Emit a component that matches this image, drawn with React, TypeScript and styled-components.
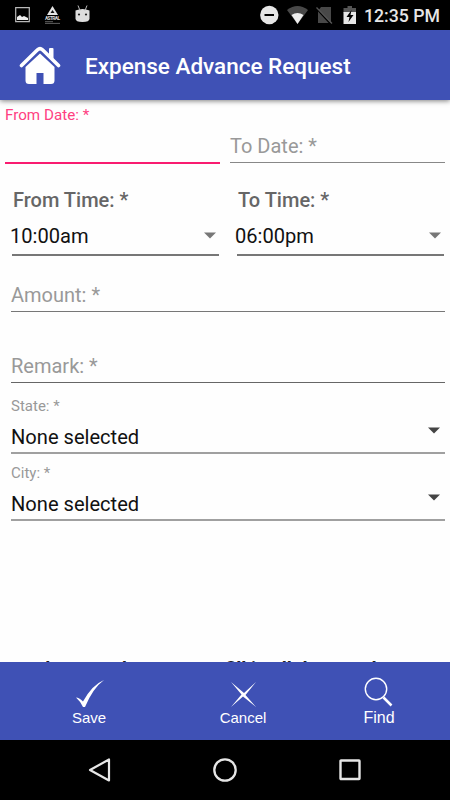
import React from "react";
import styled, { createGlobalStyle } from "styled-components";

const GlobalStyle = createGlobalStyle`
  * { box-sizing: border-box; }
  body { margin: 0; background: #fff; font-family: Roboto, sans-serif; }
`;

const Screen = styled.div`
  width: 450px;
  height: 800px;
  display: flex;
  flex-direction: column;
  overflow: hidden;
  background: #fefefe;
`;

const StatusBar = styled.div`
  height: 30px;
  flex: none;
  background: #000;
  display: flex;
  justify-content: space-between;
  color: #e6e6e6;
`;

const Clock = styled.time`
  width: 86px;
  font-size: 17.7px;
  font-weight: 500;
  line-height: 32px;
  white-space: nowrap;
`;

const StatusGroup = styled.div`
  display: flex;
`;

const Header = styled.header`
  height: 70px;
  flex: none;
  display: flex;
  align-items: center;
  padding-left: 19px;
  background: #3f51b5;
  color: #fff;
  box-shadow: 0 1px 5px rgba(0, 0, 0, 0.5);
  z-index: 1;
`;

const Title = styled.h1`
  margin: 2px 0 0 24px;
  font-size: 22.5px;
  font-weight: 500;
  line-height: 30px;
  white-space: nowrap;
`;

const Form = styled.main`
  height: 562px;
  flex: none;
  overflow: hidden;
  display: flex;
  flex-direction: column;
`;

const DateRow = styled.div`
  display: grid;
  grid-template-columns: 215px 215px;
  column-gap: 10px;
  padding-left: 5px;
  height: 64px;
`;

const TimeRow = styled.div`
  display: grid;
  grid-template-columns: 207px 207px;
  column-gap: 18px;
  padding-left: 12px;
  height: 92px;
`;

const Stack = styled.div`
  display: flex;
  flex-direction: column;
  padding: 0 5px 0 11px;
`;

const Field = styled.div<{ $height: number; $line: string; $weight?: number }>`
  height: ${(p) => p.$height}px;
  display: flex;
  flex-direction: column;
  justify-content: flex-end;
  border-bottom: ${(p) => p.$weight ?? 1}px solid ${(p) => p.$line};
`;

const Placeholder = styled.label`
  height: 31px;
  font-size: 20px;
  line-height: 30px;
  color: #999;
`;

const FloatingLabel = styled.label<{ $active?: boolean }>`
  font-size: ${(p) => (p.$active ? 15.2 : 15)}px;
  line-height: 18px;
  color: ${(p) => (p.$active ? "#ff4081" : "#999")};
  margin-bottom: ${(p) => (p.$active ? "38px" : "10px")};
`;

const TimeLabel = styled.label`
  font-size: 20px;
  font-weight: 500;
  line-height: 24px;
  color: #666;
  padding-left: 1px;
`;

const Value = styled.div<{ $shift?: number; $bottom: number; $gap?: number }>`
  display: flex;
  justify-content: space-between;
  margin-top: ${(p) => p.$gap ?? 0}px;
  margin-left: ${(p) => p.$shift ?? 0}px;
  padding-bottom: ${(p) => p.$bottom}px;
  font-size: 20.1px;
  line-height: 24px;
  color: #111;
`;

const Arrow = styled.svg<{ $right: number; $top: number }>`
  width: 12px;
  height: 7px;
  flex: none;
  margin: ${(p) => p.$top}px ${(p) => p.$right}px 0 0;
`;

const Note = styled.p`
  margin: 136px 0 0;
  padding-left: 33px;
  font-size: 19px;
  font-weight: 700;
  line-height: 24px;
  color: #222;
  white-space: nowrap;
`;

const ActionBar = styled.footer`
  height: 78px;
  flex: none;
  display: grid;
  grid-template-columns: 178px 130px 142px;
  background: #3f51b5;
`;

const Action = styled.button<{ $size?: number; $lift?: number }>`
  border: 0;
  padding: ${(p) => 14 - (p.$lift ?? 0)}px 0 0;
  background: none;
  color: #fff;
  font-family: "Liberation Sans", sans-serif;
  font-size: ${(p) => p.$size ?? 15}px;
  line-height: ${(p) => (p.$size ? 22 : 20)}px;
  display: flex;
  flex-direction: column;
  align-items: center;
`;

const NavBar = styled.nav`
  height: 60px;
  flex: none;
  display: grid;
  grid-template-columns: repeat(3, 125px);
  justify-content: center;
  align-items: center;
  justify-items: center;
  background: #000;
`;

const DropArrow = ({ right, top, color }: { right: number; top: number; color: string }) => (
  <Arrow $right={right} $top={top} viewBox="0 0 12 7">
    <path d="M0 .5h12L6 6.5z" fill={color} />
  </Arrow>
);

const TimeField = ({ label, value }: { label: string; value: string }) => (
  <Field $height={92} $line="#777" $weight={2}>
    <TimeLabel>{label}</TimeLabel>
    <Value $shift={-2} $bottom={6} $gap={12}>
      {value}
      <DropArrow right={3} top={8} color="#777" />
    </Value>
  </Field>
);

const SelectField = ({ label, height }: { label: string; height: number }) => (
  <Field $height={height} $line="#a0a0a0" $weight={2}>
    <FloatingLabel>{label}</FloatingLabel>
    <Value $bottom={3.5}>
      None selected
      <DropArrow right={5} top={2} color="#444" />
    </Value>
  </Field>
);

export default function App() {
  return (
    <>
      <GlobalStyle />
      <Screen>
        <StatusBar>
          <StatusGroup>
            <svg width="100" height="30" viewBox="0 0 100 30">
              <path d="M15.7 7.7h13.6v14H15.7z" fill="none" stroke="#b9b9b9" strokeWidth="1.2" />
              <path d="M17 20v-3l3-2 2 2 2-1 4 2v2z" fill="#eee" />
              <path d="M52.5 6 58 15H47z" fill="#e5e5e5" />
              <path d="m52.5 10 2 3h-4z" fill="#111" />
              <text x="45" y="20.4" fontSize="4.8" fontWeight="700" textLength="15" fill="#ddd">ASTRAL</text>
              <path d="M45 21.7h8M45 23.4h15" stroke="#777" strokeWidth=".8" />
              <path d="M75.5 10.500q7-3 14 0v8q0 3.500-7 3.500t-7-3.500z" fill="#ddd" />
              <path d="m78 5.500 2 5m7-5-2 5" stroke="#bbb" />
              <circle cx="79" cy="14.500" r="1.100" fill="#222" />
              <circle cx="86" cy="14.500" r="1.100" fill="#222" />
            </svg>
          </StatusGroup>
          <StatusGroup>
            <svg width="108" height="30" viewBox="256 0 108 30">
              <circle cx="269.300" cy="15" r="9.200" fill="#e6e6e6" />
              <path d="M264.500 15h9.500" stroke="#000" strokeWidth="2" />
              <path d="M287 10q10.500-8 21 0l-10.500 14z" fill="#484848" />
              <path d="M291.500 15q6-4 12 0l-6 9z" fill="#eee" />
              <path d="M321 7h10v16h-13V11z" fill="#484848" />
              <path d="M316.500 8.800 331.500 25" stroke="#000" strokeWidth="1.500" />
              <path d="M316.500 7.500 332 23.500" stroke="#555" strokeWidth="1.300" />
              <path d="M343.500 8h4V6h4.500v2h4v5h-12.500z" fill="#555" />
              <path d="M343.500 12h12.500v12h-12.500z" fill="#e6e6e6" />
              <path d="m351.500 10-5 7h3l-1 5 5-7h-3z" fill="#000" />
            </svg>
            <Clock>12:35 PM</Clock>
          </StatusGroup>
        </StatusBar>
        <Header>
          <svg width="42" height="42" viewBox="19 44 42 42" fill="#fff">
            <path d="m21.500 65.500 16-15.700q2.500-2.200 5 0l16 15.700" fill="none" stroke="#fff" strokeWidth="3.600" strokeLinecap="round" />
            <path d="M49 49q0-1 1-1h2.500q1 0 1 1v10L49 54.600z" />
            <path d="M25.500 67 40 53.500 54.500 67v13.500q0 3.500-3.500 3.500h-7.500V73h-7v11H29q-3.500 0-3.500-3.500z" />
          </svg>
          <Title>Expense Advance Request</Title>
        </Header>
        <Form>
          <DateRow>
            <Field $height={64} $line="#f91c70" $weight={2}>
              <FloatingLabel $active>From Date: *</FloatingLabel>
            </Field>
            <Field $height={63} $line="#888">
              <Placeholder>To Date: *</Placeholder>
            </Field>
          </DateRow>
          <TimeRow>
            <TimeField label="From Time: *" value="10:00am" />
            <TimeField label="To Time: *" value="06:00pm" />
          </TimeRow>
          <Stack>
            <Field $height={56} $line="#777">
              <Placeholder>Amount: *</Placeholder>
            </Field>
            <Field $height={71} $line="#666">
              <Placeholder>Remark: *</Placeholder>
            </Field>
            <SelectField label="State: *" height={71} />
            <SelectField label="City: *" height={67} />
          </Stack>
          <Note>Please make sure you fill in all the mandatory</Note>
        </Form>
        <ActionBar>
          <Action>
            <svg width="34" height="32" viewBox="75 676 34 32">
              <path d="M79 697.500q3 0 7 4Q95 685 107 680q-11 8-19 27h-2q-2-5-7-9.500z" fill="#fff" />
            </svg>
            Save
          </Action>
          <Action>
            <svg width="30" height="32" viewBox="229 676 30 32">
              <path d="m232 682 13 11 12-11-10.500 13L257 707l-13-10.500L232 707l10.500-12.500z" fill="#fff" />
            </svg>
            Cancel
          </Action>
          <Action $size={16} $lift={1}>
            <svg width="34" height="32" viewBox="361 675 34 32">
              <circle cx="375" cy="689" r="10.700" fill="none" stroke="#fff" strokeWidth="1.400" />
              <path d="m382.500 697.500 8 8" stroke="#fff" strokeWidth="2.500" />
            </svg>
            Find
          </Action>
        </ActionBar>
        <NavBar>
          <svg width="24" height="26" viewBox="0 0 24 26"><path d="M2 13 21 2.500v21z" fill="none" stroke="#e6e6e6" strokeWidth="2.200" strokeLinejoin="round" /></svg>
          <svg width="26" height="26" viewBox="0 0 26 26"><circle cx="13" cy="13" r="10.700" fill="none" stroke="#e6e6e6" strokeWidth="2.300" /></svg>
          <svg width="24" height="24" viewBox="0 0 24 24"><rect x="2.500" y="2.500" width="19" height="18.500" rx=".5" fill="none" stroke="#e6e6e6" strokeWidth="2.400" /></svg>
        </NavBar>
      </Screen>
    </>
  );
}
